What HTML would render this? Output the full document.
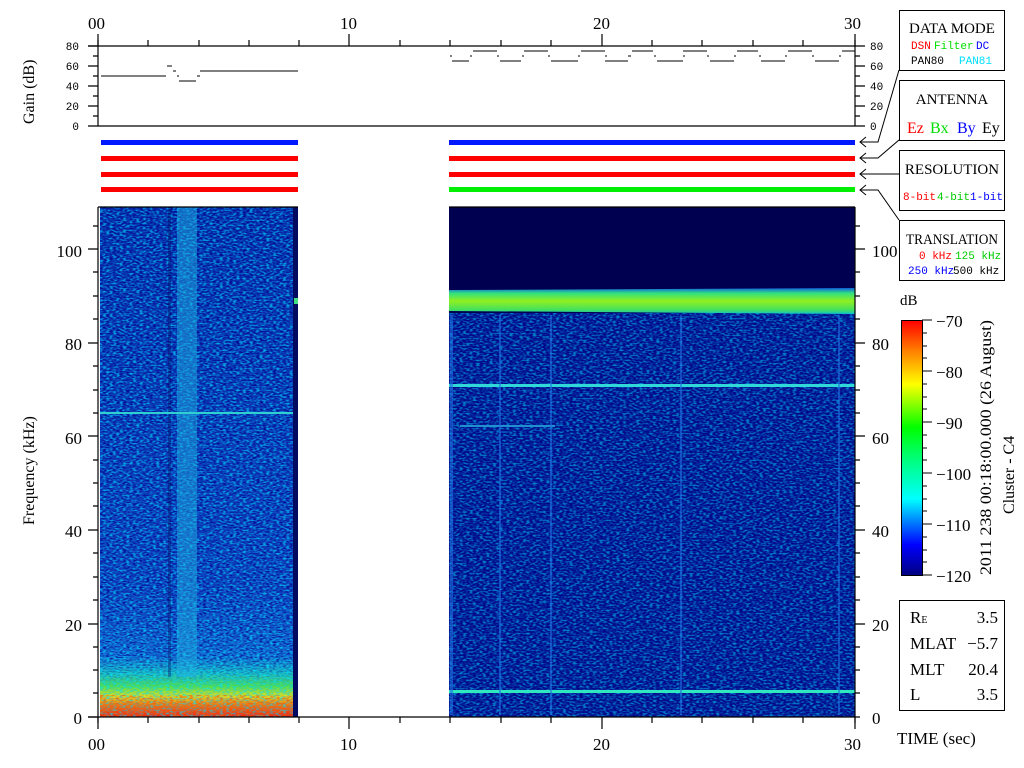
<!DOCTYPE html>
<html><head><meta charset="utf-8"><style>
html,body{margin:0;padding:0;background:#fff;width:1024px;height:768px;overflow:hidden}
svg text{font-family:"Liberation Serif",serif}
.m{font-family:"Liberation Mono",monospace !important;font-size:11px}
</style></head><body>
<svg width="1024" height="768" viewBox="0 0 1024 768" xmlns="http://www.w3.org/2000/svg">
<defs>
<filter id="nzd" x="0" y="0" width="100%" height="100%">
<feTurbulence type="fractalNoise" baseFrequency="0.3 0.8" numOctaves="1" seed="11"/>
<feColorMatrix type="matrix" values="0 0 0 0 0  0 0 0 0 0  0 0 0 0 0.25  -4 0 0 0 2.4"/>
</filter>
<filter id="nz2" x="0" y="0" width="100%" height="100%">
<feTurbulence type="fractalNoise" baseFrequency="0.3 0.6" numOctaves="1" seed="7" result="t"/>
<feColorMatrix in="t" type="matrix" values="0 0 0 0 0  1.6 0 0 0 -0.35  0 0 0 0 1  4 0 0 0 -1.7"/>
</filter>
<filter id="nzr" x="0" y="0" width="100%" height="100%">
<feTurbulence type="fractalNoise" baseFrequency="0.3 0.6" numOctaves="1" seed="5"/>
<feColorMatrix type="matrix" values="0 0 0 0 1  0 0 0 0 0.1  0 0 0 0 0  4 0 0 0 -1.8"/>
</filter>
<linearGradient id="fade" x1="0" y1="0" x2="0" y2="1">
<stop offset="0" stop-color="#fff"/><stop offset="0.88" stop-color="#fff"/><stop offset="0.94" stop-color="#000"/></linearGradient>
<mask id="mk"><rect x="100" y="207" width="193" height="510" fill="url(#fade)"/></mask>
<linearGradient id="lb" x1="0" y1="0" x2="0" y2="1">
<stop offset="0" stop-color="#0a28a8"/><stop offset="0.75" stop-color="#1440c0"/>
<stop offset="0.88" stop-color="#1a70d8"/><stop offset="0.915" stop-color="#20c8c0"/>
<stop offset="0.94" stop-color="#50e050"/><stop offset="0.96" stop-color="#e0e020"/>
<stop offset="0.975" stop-color="#f08010"/><stop offset="1" stop-color="#f02010"/></linearGradient>
<linearGradient id="cb" x1="0" y1="1" x2="0" y2="0">
<stop offset="0" stop-color="#000080"/><stop offset="0.12" stop-color="#0000ff"/>
<stop offset="0.3" stop-color="#00ffff"/><stop offset="0.45" stop-color="#00ff80"/>
<stop offset="0.58" stop-color="#00ff00"/><stop offset="0.75" stop-color="#ffff00"/>
<stop offset="0.88" stop-color="#ff8000"/><stop offset="1" stop-color="#ff0000"/></linearGradient>
<linearGradient id="gb" x1="0" y1="0" x2="0" y2="1">
<stop offset="0" stop-color="#1060e0"/><stop offset="0.2" stop-color="#30e080"/>
<stop offset="0.5" stop-color="#90f020"/><stop offset="0.85" stop-color="#40e060"/><stop offset="1" stop-color="#10c0d0"/></linearGradient>
</defs>

<!-- spectrogram left -->
<rect x="100" y="207" width="193" height="510" fill="url(#lb)"/>
<g mask="url(#mk)">
<rect x="100" y="207" width="193" height="510" filter="url(#nzd)" opacity="0.7"/>
</g>
<rect x="100" y="207" width="193" height="510" filter="url(#nz2)" opacity="0.6"/>
<rect x="100" y="695" width="193" height="22" filter="url(#nzr)" opacity="0.7"/>
<rect x="177" y="207" width="20" height="470" fill="#20b0e0" opacity="0.5"/>
<rect x="168" y="207" width="3" height="470" fill="#000860" opacity="0.35"/>
<rect x="100" y="412" width="193" height="2" fill="#30d0d0"/>
<rect x="293" y="207" width="5" height="510" fill="#000a60"/>
<rect x="294" y="298" width="4" height="6" fill="#40e080"/>

<!-- spectrogram right -->
<rect x="449" y="207" width="406" height="510" fill="#000050"/>
<rect x="449" y="313" width="406" height="404" fill="#0818a0" opacity="0.75"/>
<rect x="449" y="313" width="406" height="404" filter="url(#nzd)" opacity="0.8"/>
<rect x="449" y="313" width="406" height="404" filter="url(#nz2)" opacity="0.5"/>
<path d="M449 290 L855 288 L855 314 L449 311 Z" fill="url(#gb)"/>
<rect x="449" y="384" width="406" height="3" fill="#30d8d8"/>
<rect x="449" y="690" width="406" height="3" fill="#30e8c0"/>
<rect x="460" y="425" width="95" height="2" fill="#2090d0"/>
<g fill="#2070e0" opacity="0.6">
<rect x="499" y="315" width="2" height="400"/><rect x="550" y="315" width="2" height="400"/>
<rect x="680" y="315" width="2" height="400"/><rect x="838" y="315" width="2" height="400"/>
<rect x="450" y="315" width="3" height="400"/></g>

<!-- axes -->
<g stroke="#000" stroke-width="1.2" fill="none">
<path d="M88 46 H855 M98 40 V126 M88 126 H855 M855 40 V126"/>
<path d="M98 207 V717 M855 207 V717 M88 717 H860 M98 717 V723 M855 717 V723"/>
<path d="M98 207 H298 M449 207 H855"/>
<path d="M148 40V46 M199 40V46 M249 40V46 M299 40V46 M400 40V46 M450 40V46 M501 40V46 M551 40V46 M652 40V46 M702 40V46 M753 40V46 M803 40V46 M349 34V46 M602 34V46 M98 34V46 M855 34V46"/>
<path d="M148 717V723 M199 717V723 M249 717V723 M299 717V723 M400 717V723 M450 717V723 M501 717V723 M551 717V723 M652 717V723 M702 717V723 M753 717V723 M803 717V723 M349 717V729 M602 717V729 M98 717V729 M855 717V729"/>
<path d="M88 46H98 M93 56H98 M88 66H98 M93 76H98 M88 86H98 M93 96H98 M88 106H98 M93 116H98"/>
<path d="M855 46H865 M855 56H860 M855 66H865 M855 76H860 M855 86H865 M855 96H860 M855 106H865 M855 116H860 M855 126H865"/>
<path d="M88 717H98 M88 624H98 M88 530H98 M88 436H98 M88 343H98 M88 249H98 M93 693H98 M93 670H98 M93 647H98 M93 600H98 M93 577H98 M93 553H98 M93 506H98 M93 483H98 M93 460H98 M93 413H98 M93 390H98 M93 366H98 M93 319H98 M93 296H98 M93 272H98 M93 226H98"/>
<path d="M855 624H865 M855 530H865 M855 436H865 M855 343H865 M855 249H865 M855 693H860 M855 670H860 M855 647H860 M855 600H860 M855 577H860 M855 553H860 M855 506H860 M855 483H860 M855 460H860 M855 413H860 M855 390H860 M855 366H860 M855 319H860 M855 296H860 M855 272H860 M855 226H860"/>
</g>
<!-- gain lines -->
<g stroke="#000" stroke-width="1" fill="none">
<path d="M101 76H166 M167 66H172 M173 71H176 M177 76H179 M179 81H196 M197 76H200 M200 71H298"/>
<path d="M450 56H452 M452 61H469 M470 56H472 M473 51H497 M497 56H499 M500 61H521 M522 56H524 M524 51H548 M548 56H550 M551 61H578 M578 56H580 M581 51H605 M605 56H607 M605 61H628 M628 56H631 M632 51H653 M654 56H656 M657 61H683 M683 56H685 M683 51H707 M707 56H709 M710 61H734 M734 56H736 M737 51H758 M759 56H761 M761 61H785 M785 56H787 M788 51H812 M812 56H814 M815 61H839 M839 56H841 M842 51H855"/>
</g>
<!-- bars -->
<g>
<rect x="101" y="140" width="197" height="5" fill="#0018ff"/><rect x="449" y="140" width="406" height="5" fill="#0018ff"/>
<rect x="101" y="156" width="197" height="5" fill="#ff0000"/><rect x="449" y="156" width="406" height="5" fill="#ff0000"/>
<rect x="101" y="172" width="197" height="5" fill="#ff0000"/><rect x="449" y="172" width="406" height="5" fill="#ff0000"/>
<rect x="101" y="187" width="197" height="5" fill="#ff0000"/><rect x="449" y="187" width="406" height="5" fill="#00ee00"/>
</g>

<!-- labels -->
<g font-size="17" fill="#000">
<text x="88" y="29">00</text><text x="340" y="29">10</text><text x="593" y="29">20</text><text x="844" y="29">30</text>
<text x="88" y="750">00</text><text x="340" y="750">10</text><text x="593" y="750">20</text><text x="844" y="750">30</text>
</g>
<g class="m" text-anchor="end" fill="#000"><text class="m" x="79" y="50">80</text><text class="m" x="79" y="70">60</text><text class="m" x="79" y="90">40</text><text class="m" x="79" y="110">20</text><text class="m" x="79" y="130">0</text></g>
<g fill="#000"><text class="m" x="870" y="50">80</text><text class="m" x="870" y="70">60</text><text class="m" x="870" y="90">40</text><text class="m" x="870" y="110">20</text><text class="m" x="870" y="130">0</text></g>
<g font-size="17" text-anchor="end"><text x="82" y="257">100</text><text x="82" y="350">80</text><text x="82" y="444">60</text><text x="82" y="537">40</text><text x="82" y="631">20</text><text x="82" y="724">0</text></g>
<g font-size="17"><text x="872" y="257">100</text><text x="872" y="350">80</text><text x="872" y="444">60</text><text x="872" y="537">40</text><text x="872" y="631">20</text><text x="872" y="724">0</text></g>
<text font-size="16" transform="translate(34,124) rotate(-90)">Gain (dB)</text>
<text font-size="16" transform="translate(34,525) rotate(-90)">Frequency (kHz)</text>

<!-- boxes -->
<g stroke="#000" stroke-width="1" fill="none">
<rect x="899.5" y="10.5" width="105" height="60"/><rect x="899.5" y="80.5" width="105" height="60"/>
<rect x="899.5" y="150.5" width="105" height="60"/><rect x="899.5" y="220.5" width="105" height="60"/>
<path d="M899 70 L878 142 H860 M866 137 L860 142 L866 147"/>
<path d="M899 140 L878 158 H860 M866 153 L860 158 L866 163"/>
<path d="M899 174 H860 M866 169 L860 174 L866 179"/>
<path d="M899 220 L878 190 H860 M866 185 L860 190 L866 195"/>
</g>
<g text-anchor="middle" font-size="15"><text x="952" y="33">DATA MODE</text><text x="952" y="104">ANTENNA</text><text x="952" y="174">RESOLUTION</text><text x="952" y="244" textLength="92" lengthAdjust="spacingAndGlyphs">TRANSLATION</text></g>
<text class="m" x="911" y="49" fill="#ff0000">DSN</text><text class="m" x="934" y="49" fill="#00dd00">Filter</text><text class="m" x="976" y="49" fill="#0000ff">DC</text>
<text class="m" x="911" y="64" fill="#000">PAN80</text><text class="m" x="959" y="64" fill="#00e0ff">PAN81</text>
<g font-size="16"><text x="907" y="133" fill="#ff0000">Ez</text><text x="930" y="133" fill="#00dd00">Bx</text><text x="957" y="133" fill="#0000ff">By</text><text x="982" y="133" fill="#000">Ey</text></g>
<text class="m" x="903" y="200" fill="#ff0000">8-bit</text><text class="m" x="937" y="200" fill="#00cc00">4-bit</text><text class="m" x="970" y="200" fill="#0000ff">1-bit</text>
<text class="m" x="919" y="259" fill="#ff0000">0 kHz</text><text class="m" x="955" y="259" fill="#00cc00">125 kHz</text>
<text class="m" x="908" y="274" fill="#0000ff">250 kHz</text><text class="m" x="953" y="274" fill="#000">500 kHz</text>

<!-- colorbar -->
<text x="900" y="305" font-size="15">dB</text>
<rect x="901.5" y="320.5" width="21" height="255" fill="url(#cb)" stroke="#000"/>
<g stroke="#000"><path d="M922 320H932 M922 371H932 M922 422H932 M922 473H932 M922 524H932 M922 575H932 M922 333H927 M922 346H927 M922 358H927 M922 384H927 M922 397H927 M922 409H927 M922 435H927 M922 448H927 M922 460H927 M922 486H927 M922 499H927 M922 511H927 M922 537H927 M922 550H927 M922 562H927"/></g>
<g font-size="17"><text x="936" y="327">−70</text><text x="936" y="378">−80</text><text x="936" y="429">−90</text><text x="936" y="480">−100</text><text x="936" y="531">−110</text><text x="936" y="582">−120</text></g>
<text font-size="16" transform="translate(991,575) rotate(-90)" textLength="255" lengthAdjust="spacingAndGlyphs">2011 238 00:18:00.000 (26 August)</text>
<text font-size="16" transform="translate(1014,514) rotate(-90)">Cluster - C4</text>

<!-- info box -->
<rect x="899.5" y="600.5" width="105" height="110" fill="none" stroke="#000"/>
<g font-size="17"><text x="910" y="623">R<tspan font-size="10">E</tspan></text><text x="910" y="649">MLAT</text><text x="910" y="675">MLT</text><text x="910" y="700">L</text></g>
<g font-size="17" text-anchor="end"><text x="998" y="623">3.5</text><text x="998" y="649">−5.7</text><text x="998" y="675">20.4</text><text x="998" y="700">3.5</text></g>
<text x="897" y="744" font-size="17">TIME (sec)</text>
</svg>
</body></html>
